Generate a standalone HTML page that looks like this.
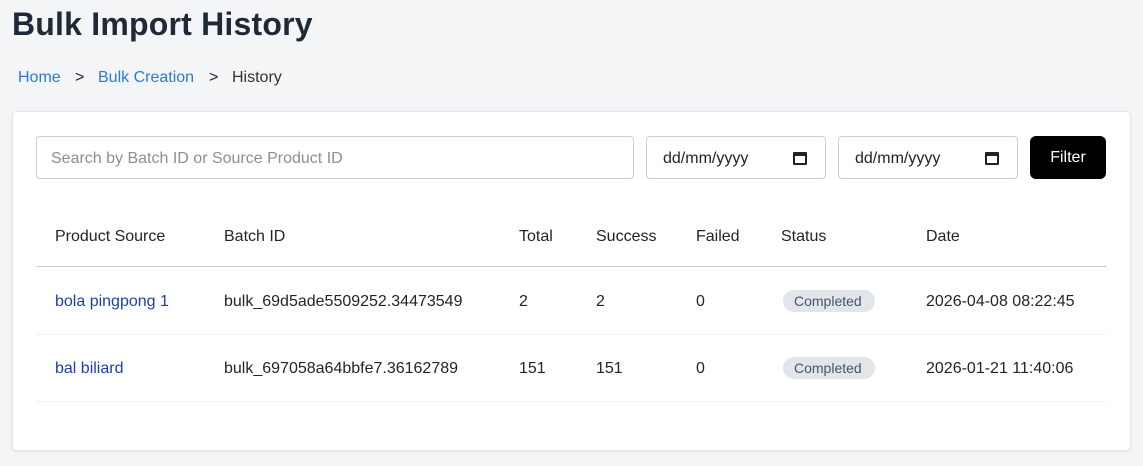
<!DOCTYPE html>
<html><head><style>
body{margin:0;width:1143px;height:466px;background:#f4f5f7;font-family:"Liberation Sans",sans-serif;position:relative;overflow:hidden;color:#212529}
.a{position:absolute;white-space:nowrap}
h1{position:absolute;left:12px;top:6px;margin:0;font-size:32px;font-weight:bold;color:#1f2937;letter-spacing:0.2px}
.card{position:absolute;left:12px;top:111px;width:1117px;height:338px;background:#fff;border:1px solid #e3e5e8;border-radius:4px;box-shadow:0 1px 2px rgba(0,0,0,.06)}
.inp{position:absolute;top:136px;height:43px;border:1px solid #ccc;border-radius:4px;box-sizing:border-box;background:#fff;font-size:16px;line-height:43px}
.t{font-size:16px}
.badge{position:absolute;background:#e2e5ea;border-radius:11px;font-size:14px;color:#4b5563;padding:0 13px 0 11px;height:22px;line-height:22px}
.link{color:#1e3fae}
</style></head><body>
<h1>Bulk Import History</h1>
<div class="a t" style="left:18px;top:69px;color:#2a7bd1">Home</div>
<div class="a t" style="left:75px;top:69px">&gt;</div>
<div class="a t" style="left:98px;top:69px;color:#2a7bd1">Bulk Creation</div>
<div class="a t" style="left:209px;top:69px">&gt;</div>
<div class="a t" style="left:232px;top:69px;color:#333">History</div>
<div class="card"></div>
<div class="inp" style="left:36px;width:598px;padding-left:14px;color:#8a9096">Search by Batch ID or Source Product ID</div>
<div class="inp" style="left:646px;width:180px;padding-left:16px;color:#222">dd/mm/yyyy<span style="position:absolute;left:146px;top:15px;width:14px;height:13px;border:2px solid #222;border-top-width:4px;box-sizing:border-box;border-radius:1px"></span></div>
<div class="inp" style="left:838px;width:180px;padding-left:16px;color:#222">dd/mm/yyyy<span style="position:absolute;left:146px;top:15px;width:14px;height:13px;border:2px solid #222;border-top-width:4px;box-sizing:border-box;border-radius:1px"></span></div>
<div class="a" style="left:1030px;top:136px;width:76px;height:43px;background:#000;border-radius:6px;color:#fff;font-size:16px;text-align:center;line-height:44px">Filter</div>
<div class="a t" style="left:55px;top:228px">Product Source</div>
<div class="a t" style="left:224px;top:228px">Batch ID</div>
<div class="a t" style="left:519px;top:228px">Total</div>
<div class="a t" style="left:596px;top:228px">Success</div>
<div class="a t" style="left:696px;top:228px">Failed</div>
<div class="a t" style="left:781px;top:228px">Status</div>
<div class="a t" style="left:926px;top:228px">Date</div>
<div class="a" style="left:36px;top:266px;width:1070px;height:1px;background:#ccc"></div>
<div class="a t link" style="left:55px;top:293px">bola pingpong 1</div>
<div class="a t" style="left:224px;top:293px">bulk_69d5ade5509252.34473549</div>
<div class="a t" style="left:519px;top:293px">2</div>
<div class="a t" style="left:596px;top:293px">2</div>
<div class="a t" style="left:696px;top:293px">0</div>
<div class="badge" style="left:783px;top:290px">Completed</div>
<div class="a t" style="left:926px;top:293px">2026-04-08 08:22:45</div>
<div class="a" style="left:36px;top:334px;width:1070px;height:1px;background:#eee"></div>
<div class="a t link" style="left:55px;top:360px">bal biliard</div>
<div class="a t" style="left:224px;top:360px">bulk_697058a64bbfe7.36162789</div>
<div class="a t" style="left:519px;top:360px">151</div>
<div class="a t" style="left:596px;top:360px">151</div>
<div class="a t" style="left:696px;top:360px">0</div>
<div class="badge" style="left:783px;top:357px">Completed</div>
<div class="a t" style="left:926px;top:360px">2026-01-21 11:40:06</div>
<div class="a" style="left:36px;top:401px;width:1070px;height:1px;background:#eee"></div>
</body></html>
